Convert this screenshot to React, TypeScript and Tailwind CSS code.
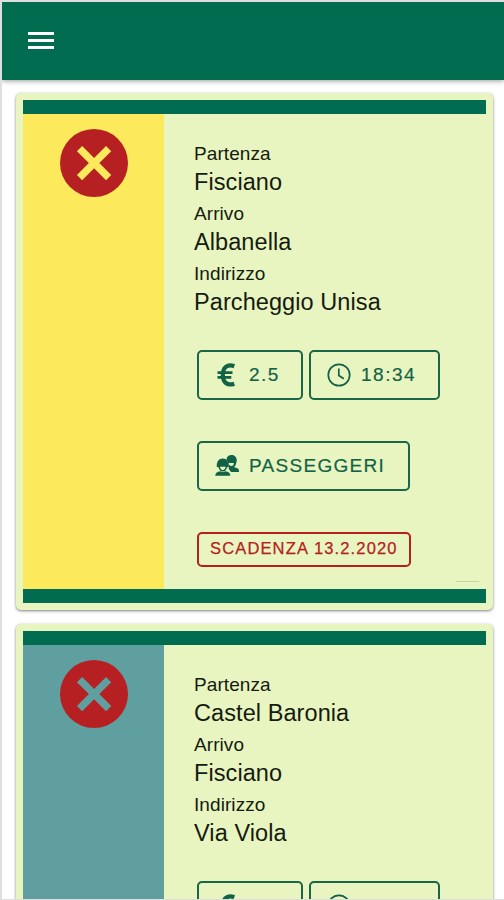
import { ReactNode } from "react"

type Ride = {
    from: string
    to: string
    address: string
    price?: string
    time?: string
    deadline?: string
    color: string
}

const rides: Ride[] = [
    { from: "Fisciano", to: "Albanella", address: "Parcheggio Unisa", price: "2.5", time: "18:34", deadline: "13.2.2020", color: "bg-[#fdea5c]" },
    { from: "Castel Baronia", to: "Fisciano", address: "Via Viola", color: "bg-[#609f9f]" },
]

function CloseIcon() {
    return (
        <svg className="mt-[15px] ml-px h-[68px] w-[68px]" viewBox="0 0 69 69">
            <path
                fill="#b62022"
                fillRule="evenodd"
                d="M34.5 0a34.5 34.5 0 1 1 0 69a34.5 34.5 0 1 1 0-69zM22.5 17.2L17.2 22.5L29.3 34.6L17.2 46.7L22.5 52L34.6 39.9L46.7 52L52 46.7L39.9 34.6L52 22.5L46.7 17.2L34.6 29.3z"
            />
        </svg>
    )
}

function EuroIcon() {
    return (
        <svg className="h-6 w-6" viewBox="0 0 24 24" fill="none" stroke="currentColor">
            <path strokeWidth="4.200" d="M19.300 3.200C12.200 .6 7.800 4.800 7.800 12s4.400 11.200 11.500 8.700" />
            <path strokeWidth="2.800" d="M2.500 9.600h15M2.500 14.300h13.800" />
        </svg>
    )
}

function ClockIcon() {
    return (
        <svg className="h-6 w-6" viewBox="0 0 24 24" fill="none" stroke="currentColor" strokeWidth="1.700">
            <circle cx="12" cy="12" r="10.700" />
            <path d="M11.800 5.500v7l5 3.300" />
        </svg>
    )
}

function PassengersIcon() {
    return (
        <svg className="h-6 w-6" viewBox="0 0 24 24" fill="currentColor">
            <path d="M11.500 5C12 2.500 13.800 1 16.500 1c3.600 0 5.300 2.600 5.300 5.700l-.8 3c-.3 1.600-1 2.700-2 3.400l3.800 1.500c1 .5 1.200 1.500 1.200 3.400h-8l-3.500-3z" />
            <path fill="#e8f5c1" d="M14 9h4.800c0 1.900-.9 2.900-2.300 2.900s-2.200-.7-2.500-1.400z" />
            <path fill="#e8f5c1" d="M2 12.500a6 8 0 0 1 11.600-3l.2 5.500l2 3l-1.100 3H10z" />
            <path d="M1.800 13c-.3-5.700 2-8.600 6-8.600s6.300 2.900 6 8.600l-1.700.2c-.6 2.700-2.200 4.300-4.300 4.300s-3.700-1.600-4.300-4.300z" />
            <path fill="#e8f5c1" d="M5 12.700h5.600c-.2 2-1.300 3.200-2.800 3.200S5.200 14.700 5 12.700z" />
            <path d="M.3 21.800c0-2.800 1.500-3.900 5-4.600l2.500 1.100l2.500-1.100c3.500.7 5 1.800 5 4.600z" />
        </svg>
    )
}

function Field({ label, value }: { label: string, value: string }) {
    return (
        <div className="h-[60.2px]">
            <div className="h-[26px] text-[19px] leading-[26px] tracking-[0.08px]">{label}</div>
            <div className="h-[32px] text-[23.500px] leading-[30px] tracking-[0.08px]">{value}</div>
        </div>
    )
}

function Chip({ icon, className, children }: { icon: ReactNode, className: string, children: ReactNode }) {
    return (
        <div className={`flex h-[50px] items-center gap-[10px] rounded-[5px] border-2 border-[#1b6548] pl-4 text-[19px] text-[#126346] ${className}`}>
            {icon}
            <span className="pt-0.5 [-webkit-text-stroke:0.2px_currentColor]">{children}</span>
        </div>
    )
}

function RideCard({ ride }: { ride: Ride }) {
    return (
        <div className="mb-[14px] h-[517px] shrink-0 rounded-[5px] bg-[#e8f5c1] px-[7px] pt-[7px] shadow-[0_1px_3px_rgba(0,0,0,0.5)]">
            <div className="h-[14px] bg-[#016c4f]" />
            <div className="flex h-[475px]">
                <div className={`flex w-[141px] justify-center ${ride.color}`}>
                    <CloseIcon />
                </div>
                <div className="flex-1 pl-[30px] pt-[27px]">
                    <Field label="Partenza" value={ride.from} />
                    <Field label="Arrivo" value={ride.to} />
                    <Field label="Indirizzo" value={ride.address} />
                    <div className="ml-[3px] mt-[28px] flex gap-[6px]">
                        <Chip icon={<EuroIcon />} className="w-[106px] tracking-[1.500px]">{ride.price}</Chip>
                        <Chip icon={<ClockIcon />} className="w-[131px] tracking-[1.500px]">{ride.time}</Chip>
                    </div>
                    {ride.deadline && (
                        <>
                            <div className="ml-[3px] mt-[41px]">
                                <Chip icon={<PassengersIcon />} className="w-[213px] tracking-[1.300px]">PASSEGGERI</Chip>
                            </div>
                            <div className="ml-[3px] mt-[41px] h-[35px] w-[214px] rounded-[5px] border-2 border-[#b5201d] pl-[11px] text-[16.500px] leading-[28px] tracking-[1.150px] whitespace-nowrap text-[#b5201d] [-webkit-text-stroke:0.25px_currentColor]">
                                SCADENZA {ride.deadline}
                            </div>
                            <div className="mr-[7px] mt-[14px] ml-auto h-px w-[23px] bg-[#c9d3a8]" />
                        </>
                    )}
                </div>
            </div>
            <div className="h-[14px] bg-[#016c4f]" />
        </div>
    )
}

export default function App() {
    return (
        <div className="flex h-[900px] w-[504px] flex-col overflow-hidden border-t-2 border-b border-l-2 border-[#dfdfdf] bg-white font-['Liberation_Sans',Arial,sans-serif] text-[#151b10]">
            <header className="z-10 flex h-[78px] shrink-0 items-center bg-[#016c4f] pb-px pl-[26px] shadow-[0_1px_5px_rgba(0,0,0,0.4)]">
                <div className="flex w-[26px] flex-col gap-1">
                    <div className="h-[3px] bg-white" />
                    <div className="h-[3px] bg-white" />
                    <div className="h-[3px] bg-white" />
                </div>
            </header>
            <main className="flex min-h-0 flex-1 flex-col overflow-hidden pt-[13px] pr-[11px] pl-[14px]">
                {rides.map((ride) => (
                    <RideCard key={ride.from} ride={ride} />
                ))}
            </main>
        </div>
    )
}
